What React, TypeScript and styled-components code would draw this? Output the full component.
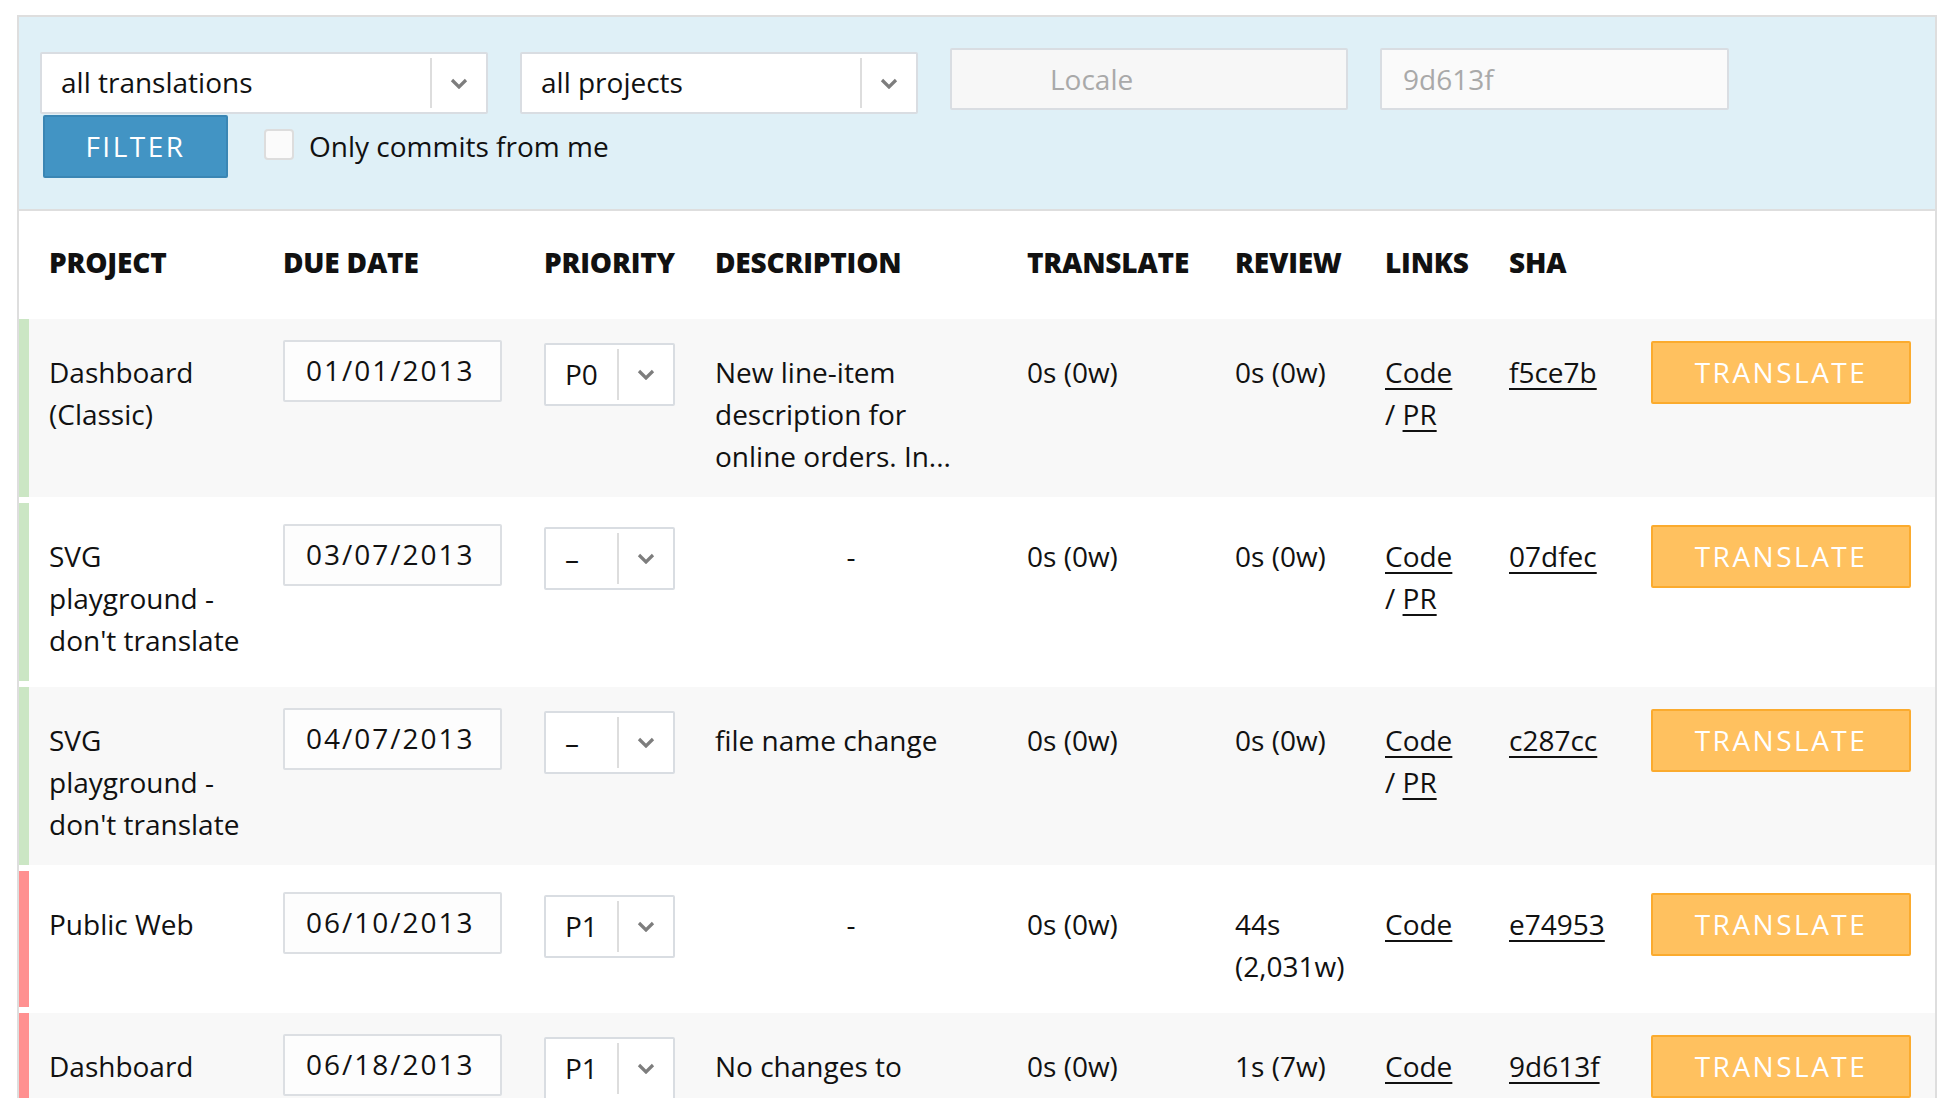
import React from 'react';
import styled, { createGlobalStyle } from 'styled-components';

const GlobalStyle = createGlobalStyle`
  body {
    margin: 0;
    background: #ffffff;
    font-family: 'Open Sans', 'Liberation Sans', sans-serif;
    color: #111111;
  }
`;

const Page = styled.div`
  padding: 15px 2px 0 17px;
`;

const Board = styled.div`
  border: 2px solid #dedede;
  border-bottom: none;
`;

const FilterPanel = styled.div`
  display: flex;
  flex-direction: column;
  background: #dff0f7;
  border-bottom: 2px solid #dedede;
  padding: 35px 0 31px 21px;
`;

const FilterRow = styled.div`
  display: flex;
  align-items: flex-start;
  gap: 32px;
`;

const ActionRow = styled.div`
  display: flex;
  align-items: center;
  margin-top: 1px;
  padding-left: 3px;
`;

interface BoxProps {
  $width: number,
  $height?: number
}

const SelectBox = styled.div<BoxProps>`
  display: flex;
  align-items: stretch;
  box-sizing: border-box;
  width: ${ ( { $width } ) => $width }px;
  height: ${ ( { $height = 62 } ) => $height }px;
  background: #ffffff;
  border: 2px solid #d9dde2;
  border-radius: 2px;
  font-size: 28px;
`;

const SelectValue = styled.span`
  flex: 1;
  display: flex;
  align-items: center;
  padding: 0 0 2px 19px;
  white-space: nowrap;
`;

const SelectCaret = styled.span`
  width: 54px;
  display: flex;
  align-items: center;
  justify-content: center;
  margin: 4px 0;
  border-left: 2px solid #dddddd;
`;

const TextInput = styled.div<BoxProps>`
  display: flex;
  align-items: center;
  box-sizing: border-box;
  width: ${ ( { $width } ) => $width }px;
  height: 62px;
  margin-top: -4px;
  padding-left: 21px;
  background: #fafafa;
  border: 2px solid #d9dde2;
  border-radius: 2px;
  font-size: 28px;
  color: #a9a9a9;
`;

const LocaleInput = styled( TextInput )`
  padding-left: 98px;
  background: #f7f7f7;
`;

const FilterButton = styled.button`
  box-sizing: border-box;
  width: 185px;
  height: 63px;
  padding-bottom: 2px;
  background: #4294c4;
  border: 2px solid #3a86b4;
  border-radius: 2px;
  color: #ffffff;
  font-family: inherit;
  font-size: 28px;
  font-weight: 500;
  letter-spacing: 2.5px;
  text-transform: uppercase;
`;

const CheckBox = styled.span`
  box-sizing: border-box;
  width: 30px;
  height: 31px;
  margin: -4px 15px 0 36px;
  background: #fbfbfb;
  border: 2px solid #dddddd;
  border-radius: 4px;
`;

const CheckLabel = styled.span`
  font-size: 28px;
  padding-bottom: 2px;
`;

const COLUMNS = '254px 261px 171px 312px 208px 150px 124px 142px 260px';

const HeaderRow = styled.div`
  display: grid;
  grid-template-columns: ${ COLUMNS };
  align-items: center;
  box-sizing: border-box;
  height: 108px;
  padding: 0 0 7px 10px;
`;

const HeaderCell = styled.div<{ $first?: boolean }>`
  padding-left: ${ ( { $first } ) => $first ? 20 : 0 }px;
  font-size: 28px;
  font-weight: 800;
  text-transform: uppercase;
  letter-spacing: -0.2px;
`;

const Rows = styled.div`
  display: flex;
  flex-direction: column;
  gap: 6px;
`;

type Status = 'ok' | 'late';

interface RowProps {
  $status: Status,
  $shaded: boolean
}

const Row = styled.div<RowProps>`
  display: grid;
  grid-template-columns: ${ COLUMNS };
  align-items: start;
  border-left: 10px solid ${ ( { $status } ) => $status === 'ok' ? '#cbe6c4' : '#ff9090' };
  background: ${ ( { $shaded } ) => $shaded ? '#f8f8f8' : '#ffffff' };
`;

interface CellProps {
  $left?: number,
  $right?: number,
  $center?: boolean
}

const TextCell = styled.div<CellProps>`
  padding: 32px ${ ( { $right = 0 } ) => $right }px 20px ${ ( { $left = 0 } ) => $left }px;
  font-size: 28px;
  line-height: 42px;
  text-align: ${ ( { $center } ) => $center ? 'center' : 'left' };
`;

const ControlCell = styled.div<{ $top: number }>`
  padding-top: ${ ( { $top } ) => $top }px;
`;

const DateBox = styled.div`
  display: flex;
  align-items: center;
  box-sizing: border-box;
  width: 219px;
  height: 62px;
  padding: 0 0 2px 21px;
  background: #fdfdfd;
  border: 2px solid #dcdfe3;
  border-radius: 2px;
  font-size: 28px;
  letter-spacing: 2px;
`;

const Link = styled.a`
  color: #111111;
  text-decoration: underline;
  text-decoration-thickness: 2px;
  text-underline-offset: 5px;
`;

const TranslateButton = styled.button`
  box-sizing: border-box;
  width: 260px;
  height: 63px;
  padding-bottom: 2px;
  background: #ffc15f;
  border: 2px solid #fbab2e;
  border-radius: 2px;
  color: #ffffff;
  font-family: inherit;
  font-size: 28px;
  font-weight: 500;
  letter-spacing: 2.5px;
  text-transform: uppercase;
`;

function Chevron(): JSX.Element {
  return (
    <svg width="18" height="11" viewBox="0 0 18 11">
      <polyline points="2,2 9,9 16,2" fill="none" stroke="#7d7d7d" strokeWidth="3.2" />
    </svg>
  );
}

interface Commit {
  status: Status,
  project: string,
  due: string,
  priority: string,
  description: string,
  translate: string,
  review: string,
  pr: boolean,
  sha: string
}

const commits: Commit[] = [
  {
    status: 'ok', project: 'Dashboard (Classic)', due: '01/01/2013', priority: 'P0',
    description: 'New line-item description for online orders. In...',
    translate: '0s (0w)', review: '0s (0w)', pr: true, sha: 'f5ce7b'
  },
  {
    status: 'ok', project: 'SVG playground - don\'t translate', due: '03/07/2013', priority: '–',
    description: '-', translate: '0s (0w)', review: '0s (0w)', pr: true, sha: '07dfec'
  },
  {
    status: 'ok', project: 'SVG playground - don\'t translate', due: '04/07/2013', priority: '–',
    description: 'file name change', translate: '0s (0w)', review: '0s (0w)', pr: true, sha: 'c287cc'
  },
  {
    status: 'late', project: 'Public Web', due: '06/10/2013', priority: 'P1',
    description: '-', translate: '0s (0w)', review: '44s (2,031w)', pr: false, sha: 'e74953'
  },
  {
    status: 'late', project: 'Dashboard (Classic)', due: '06/18/2013', priority: 'P1',
    description: 'No changes to translatable strings', translate: '0s (0w)', review: '1s (7w)', pr: false, sha: '9d613f'
  }
];

const headers = [ 'Project', 'Due Date', 'Priority', 'Description', 'Translate', 'Review', 'Links', 'SHA' ];

function App(): JSX.Element {
  return (
    <Page>
      <GlobalStyle />
      <Board>
        <FilterPanel>
          <FilterRow>
            <SelectBox $width={448}>
              <SelectValue>all translations</SelectValue>
              <SelectCaret><Chevron /></SelectCaret>
            </SelectBox>
            <SelectBox $width={398}>
              <SelectValue>all projects</SelectValue>
              <SelectCaret><Chevron /></SelectCaret>
            </SelectBox>
            <LocaleInput $width={398}>Locale</LocaleInput>
            <TextInput $width={349}>9d613f</TextInput>
          </FilterRow>
          <ActionRow>
            <FilterButton>Filter</FilterButton>
            <CheckBox />
            <CheckLabel>Only commits from me</CheckLabel>
          </ActionRow>
        </FilterPanel>

        <HeaderRow>
          {
            headers.map( ( h, i ) => <HeaderCell key={h} $first={i === 0}>{h}</HeaderCell> )
          }
        </HeaderRow>

        <Rows>
          {
            commits.map( ( c, i ) => (
              <Row key={c.sha} $status={c.status} $shaded={i % 2 === 0}>
                <TextCell $left={20} $right={39}>{c.project}</TextCell>
                <ControlCell $top={21}>
                  <DateBox>{c.due}</DateBox>
                </ControlCell>
                <ControlCell $top={24}>
                  <SelectBox $width={131} $height={63}>
                    <SelectValue>{c.priority}</SelectValue>
                    <SelectCaret><Chevron /></SelectCaret>
                  </SelectBox>
                </ControlCell>
                <TextCell $right={40} $center={c.description === '-'}>{c.description}</TextCell>
                <TextCell $right={20}>{c.translate}</TextCell>
                <TextCell $right={20}>{c.review}</TextCell>
                <TextCell>
                  <Link href="#">Code</Link>
                  {
                    c.pr && <><br />/ <Link href="#">PR</Link></>
                  }
                </TextCell>
                <TextCell><Link href="#">{c.sha}</Link></TextCell>
                <ControlCell $top={22}>
                  <TranslateButton>Translate</TranslateButton>
                </ControlCell>
              </Row>
            ) )
          }
        </Rows>
      </Board>
    </Page>
  );
}

export default App;
